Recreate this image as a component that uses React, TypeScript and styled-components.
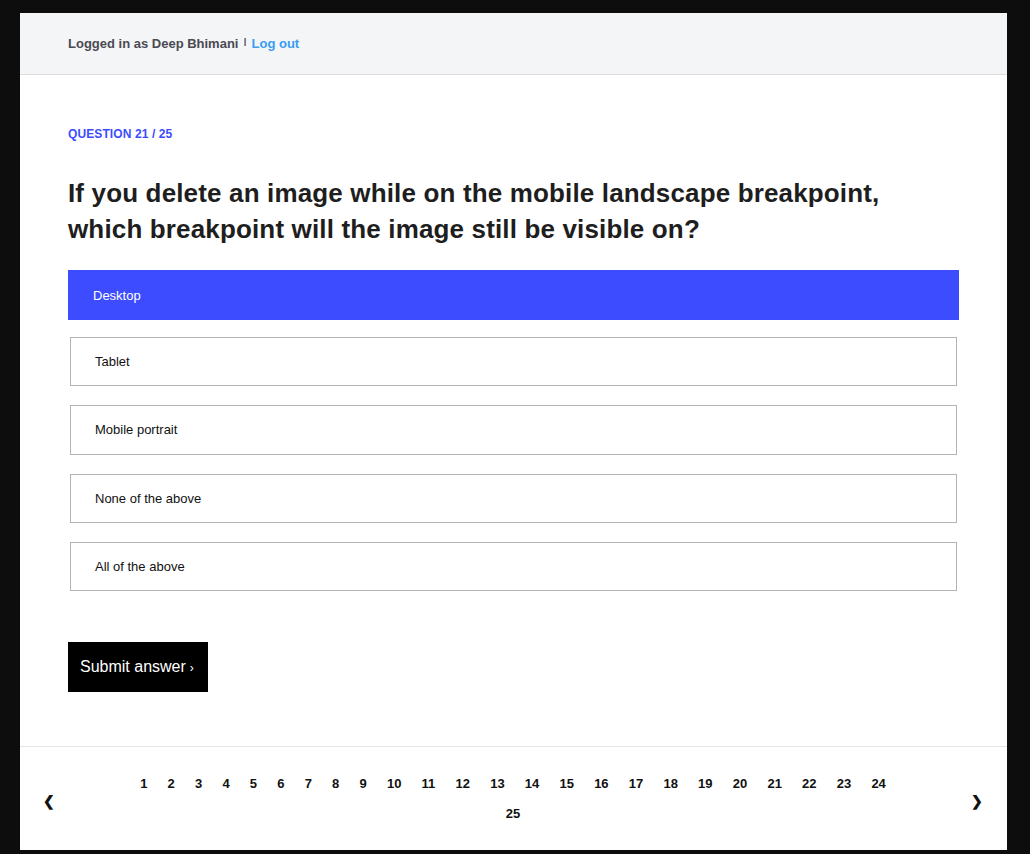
import React from "react";
import styled, { createGlobalStyle } from "styled-components";

const Global = createGlobalStyle`
  html, body { margin: 0; padding: 0; background: #0d0d0d; }
  body { font-family: "Liberation Sans", Arial, sans-serif; }
  * { box-sizing: border-box; }
`;

const Page = styled.div`
  padding: 13px 23px 4px 20px;
  background: #0d0d0d;
`;

const Panel = styled.div`
  width: 987px;
  background: #fff;
  display: flex;
  flex-direction: column;
`;

const Header = styled.header`
  height: 62px;
  background: #f4f5f7;
  border-bottom: 1px solid #dcdde0;
  display: flex;
  align-items: center;
  padding: 0 48px;
  font-size: 13px;
  font-weight: 700;
  color: #4a4a52;
`;

const Sep = styled.span`
  font-size: 11px;
  font-weight: 400;
  margin: 0 5px;
  position: relative;
  top: -2px;
  color: #333;
`;

const LogOut = styled.a`
  color: #3b9cf2;
  text-decoration: none;
  cursor: pointer;
`;

const Main = styled.main`
  padding: 52px 48px 54px;
  display: flex;
  flex-direction: column;
`;

const Label = styled.div`
  font-size: 12px;
  line-height: 14px;
  font-weight: 700;
  color: #3d4cff;
  text-transform: uppercase;
  letter-spacing: 0.1px;
`;

const Heading = styled.h1`
  margin: 34px 0 23px;
  font-size: 26px;
  line-height: 36px;
  font-weight: 700;
  color: #1e1e1e;
  letter-spacing: 0.15px;
`;

const Options = styled.div`
  display: flex;
  flex-direction: column;
  gap: 19px;
`;

const Option = styled.div<{ $selected?: boolean }>`
  height: ${(p) => (p.$selected ? "50px" : "49.33px")};
  margin: 0 ${(p) => (p.$selected ? 0 : 2)}px;
  margin-bottom: ${(p) => (p.$selected ? -2 : 0)}px;
  display: flex;
  align-items: center;
  padding-left: 24px;
  font-size: 13px;
  color: ${(p) => (p.$selected ? "#fff" : "#111")};
  background: ${(p) => (p.$selected ? "#3d4cff" : "#fff")};
  border: 1px solid ${(p) => (p.$selected ? "#3d4cff" : "#b3b3b3")};
  cursor: pointer;
`;

const Submit = styled.button`
  margin-top: 50.67px;
  align-self: flex-start;
  height: 50px;
  width: 140px;
  padding: 0 12px;
  border: none;
  background: #000;
  color: #fff;
  font-family: "Liberation Sans", Arial, sans-serif;
  font-size: 16px;
  text-align: left;
  cursor: pointer;
`;

const Chevron = styled.span`
  font-size: 12px;
  margin-left: 4px;
`;

const Footer = styled.footer`
  border-top: 1px solid #e1e6ea;
  display: flex;
  align-items: center;
  justify-content: space-between;
  padding: 22px 24px 21px 23px;
`;

const Arrow = styled.span`
  font-size: 14px;
  font-weight: 700;
  color: #111;
  width: 12px;
  text-align: center;
  cursor: pointer;
  position: relative;
  top: 2px;
`;

const Pages = styled.div`
  width: 780px;
  display: flex;
  flex-wrap: wrap;
  justify-content: center;
`;

const PageNum = styled.span`
  padding: 0 10.1px;
  font-size: 13px;
  line-height: 30px;
  font-weight: 700;
  color: #111;
  cursor: pointer;
`;

const options = ["Desktop", "Tablet", "Mobile portrait", "None of the above", "All of the above"];

export default function App() {
  return (
    <>
      <Global />
      <Page>
        <Panel>
          <Header>
            Logged in as Deep Bhimani<Sep>I</Sep>
            <LogOut>Log out</LogOut>
          </Header>
          <Main>
            <Label>Question 21 / 25</Label>
            <Heading>
              If you delete an image while on the mobile landscape breakpoint,
              <br />
              which breakpoint will the image still be visible on?
            </Heading>
            <Options>
              {options.map((o, i) => (
                <Option key={o} $selected={i === 0}>
                  {o}
                </Option>
              ))}
            </Options>
            <Submit>
              Submit answer<Chevron>›</Chevron>
            </Submit>
          </Main>
          <Footer>
            <Arrow>❮</Arrow>
            <Pages>
              {Array.from({ length: 25 }, (_, i) => (
                <PageNum key={i}>{i + 1}</PageNum>
              ))}
            </Pages>
            <Arrow>❯</Arrow>
          </Footer>
        </Panel>
      </Page>
    </>
  );
}
